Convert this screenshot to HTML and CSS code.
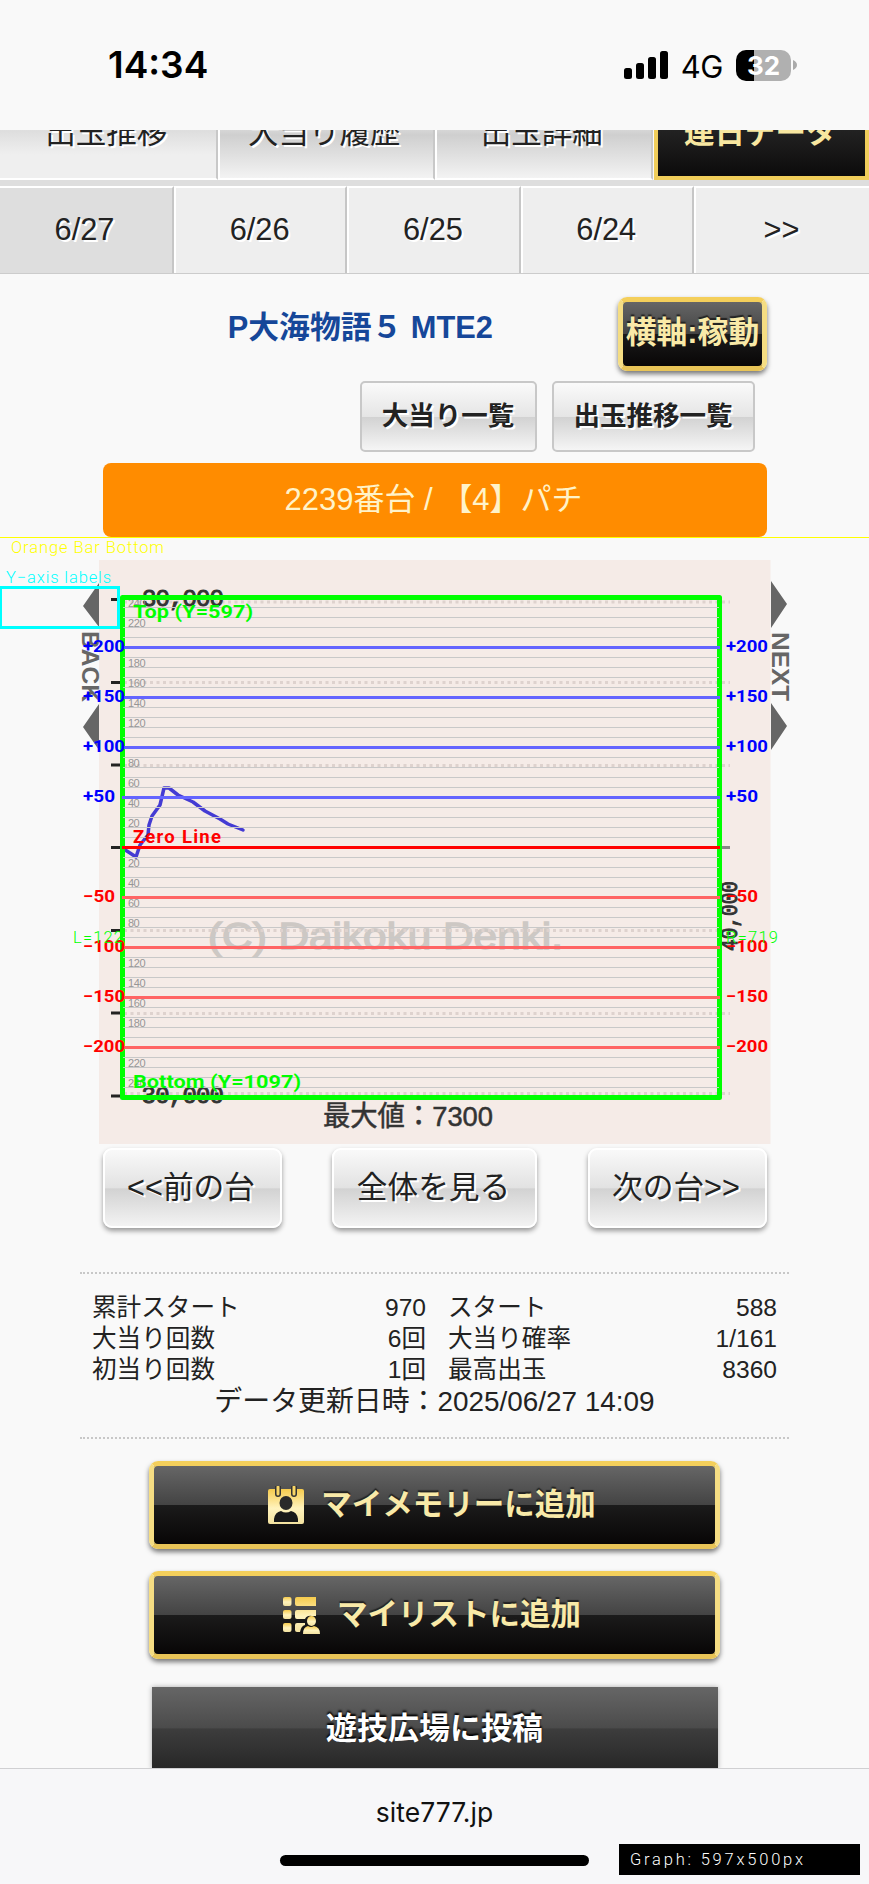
FILE: index.html
```html
<!DOCTYPE html>
<html lang="ja">
<head>
<meta charset="utf-8">
<title>site777.jp</title>
<link rel="stylesheet" href="styles.css">
</head>
<body>
<header class="status">
  <span class="clock">14:34</span>
  <div class="signals">
    <svg class="bars" width="44" height="28" viewBox="0 0 44 28"><rect x="0" y="17" width="8" height="11" rx="2.5"/><rect x="12" y="12" width="8" height="16" rx="2.5"/><rect x="24" y="6" width="8" height="22" rx="2.5"/><rect x="36" y="0" width="8" height="28" rx="2.5"/></svg>
    <span class="net">4G</span>
    <span class="battery"><span class="level">32</span><svg width="5" height="10" viewBox="0 0 5 10"><path d="M1 0Q5 2 5 5T1 10Z" fill="#aaa"/></svg></span>
  </div>
</header>
<nav class="tabs">
  <a class="tab first">出玉推移</a><a class="tab">大当り履歴</a><a class="tab">出玉詳細</a><a class="tab current">連日データ</a>
</nav>
<nav class="dates">
  <a class="date selected">6/27</a><a class="date">6/26</a><a class="date">6/25</a><a class="date">6/24</a><a class="date">&gt;&gt;</a>
</nav>
<main>
  <div class="heading"><h1>P大海物語５ MTE2</h1><a class="gold axis">横軸:稼動</a></div>
  <div class="lists"><a class="flat hits">大当り一覧</a><a class="flat trend">出玉推移一覧</a></div>
  <div class="machine">2239番台 / 【4】パチ</div>
  <svg class="chart" id="chart" width="869" height="607" viewBox="0 537 869 607">
    <rect x="99" y="560" width="671.5" height="584" fill="#f5ebe7"/>
    <g class="side">
      <path d="M99 583L83 606L99 627ZM99 704L83 727L99 750ZM771 581L787 604L771 628ZM771 703L787 726L771 750Z"/>
      <text transform="translate(81.500 631) rotate(90)" textLength="71" lengthAdjust="spacingAndGlyphs">BACK</text>
      <text transform="translate(771.500 632) rotate(90)" textLength="69" lengthAdjust="spacingAndGlyphs">NEXT</text>
    </g>
    <text class="copyright" x="208" y="949" textLength="355" lengthAdjust="spacingAndGlyphs">(C) Daikoku Denki.</text>
    <path class="dots" d="M124 602H730M124 682.5H730M124 765.5H730M124 930.5H730M124 1013.5H730M124 1093.5H730"/>
    <path class="ticks" d="M111 599.5H122M111 682.5H122M111 765H122M111 847.5H122M111 930.5H122M111 1013H122M111 1096H122"/>
    <path d="M720 847.5H730" stroke="#888" stroke-width="3"/>
    <g class="range">
      <text x="142" y="605.5" textLength="82">30,000</text>
      <text x="128" y="1102.5" textLength="96">-30,000</text>
      <text transform="translate(737 951) rotate(-90)" textLength="70" lengthAdjust="spacingAndGlyphs">40,000</text>
    </g>
    <text class="max" x="323" y="1126" textLength="170" lengthAdjust="spacingAndGlyphs">最大値：7300</text>
    <path class="series" d="M122 848L130 853L136 857L140 845L148 835L149 825L152 816L160 805L164 788H169L178 795L193 802L205 811L220 819L228 824L243 830"/>
    <g id="grid"></g>
    <rect class="frame" x="122.5" y="597.5" width="597" height="500"/>
    <g id="levels"></g>
    <path d="M122 847.5H720" stroke="#f00" stroke-width="3"/>
    <g class="note green">
      <text x="133" y="618" textLength="120" lengthAdjust="spacingAndGlyphs">Top (Y=597)</text>
      <text x="133" y="1088" textLength="168" lengthAdjust="spacingAndGlyphs">Bottom (Y=1097)</text>
    </g>
    <text class="note red" x="133" y="843" textLength="88" lengthAdjust="spacing">Zero Line</text>
    <g class="thin">
      <text x="73" y="943" textLength="50" lengthAdjust="spacing" fill="#0f0">L=122</text>
      <text x="726" y="943" textLength="52" lengthAdjust="spacing" fill="#0f0">R=719</text>
      <text x="11" y="553" textLength="153" lengthAdjust="spacing" fill="#ff0">Orange Bar Bottom</text>
      <text x="6" y="583" textLength="105" lengthAdjust="spacing" fill="#0ff">Y−axis labels</text>
    </g>
    <path d="M0 537.5H869" stroke="#ff0" stroke-width="1"/>
    <rect x="0.5" y="587.5" width="118" height="40" fill="none" stroke="#0ff" stroke-width="3"/>
  </svg>
  <div class="pager"><a class="soft">&lt;&lt;前の台</a><a class="soft wide">全体を見る</a><a class="soft">次の台&gt;&gt;</a></div>
  <section class="stats">
    <div class="grid">
      <span>累計スタート</span><b>970</b><span>スタート</span><b>588</b>
      <span>大当り回数</span><b>6回</b><span>大当り確率</span><b>1/161</b>
      <span>初当り回数</span><b>1回</b><span>最高出玉</span><b>8360</b>
    </div>
    <p class="updated">データ更新日時：2025/06/27 14:09</p>
  </section>
  <div class="actions">
    <a class="gold action">
      <svg width="36" height="38" viewBox="0 0 36 38"><defs><linearGradient id="gilt" x1="0" y1="0" x2="0" y2="1"><stop offset="0" stop-color="#f6cb4c"/><stop offset=".55" stop-color="#fff3bd"/><stop offset="1" stop-color="#f3e2a0"/></linearGradient></defs>
        <path fill="url(#gilt)" d="M2 3H34Q36 3 36 5V36Q36 38 34 38H2Q0 38 0 36V5Q0 3 2 3Z"/>
        <path d="M10 1V8M26 1V8" stroke="#333" stroke-width="6" stroke-linecap="round"/><path d="M10 1V8M26 1V8" stroke="#f8d566" stroke-width="3" stroke-linecap="round"/>
        <ellipse cx="18" cy="17" rx="6.5" ry="7" fill="#292929"/><path d="M6 36V33Q7 26 13 25Q18 28 23 25Q29 26 30 33V36Z" fill="#191919"/></svg>
      <span>マイメモリーに追加</span></a>
    <a class="gold action">
      <svg width="37" height="37" viewBox="0 0 37 37"><g fill="url(#gilt)"><rect width="8.500" height="9" rx="2"/><rect y="13" width="8.500" height="9" rx="2"/><rect y="26" width="8.500" height="9" rx="2"/><path d="M14 0H33V9H14Q12 9 12 7V2Q12 0 14 0ZM14 13H33V19H29Q24 18 22 22H14Q12 22 12 20V15Q12 13 14 13ZM14 26H22V28Q18 29 17 35H14Q12 35 12 33V28Q12 26 14 26Z"/><ellipse cx="28.500" cy="24" rx="4.500" ry="5"/><path d="M20 37Q20 30 25 29Q28 31 31 29Q37 30 37 37Z"/></g></svg>
      <span>マイリストに追加</span></a>
    <a class="post">遊技広場に投稿</a>
  </div>
</main>
<footer class="browser">
  <span class="url">site777.jp</span>
  <div class="home"></div>
  <span class="size"><svg width="241" height="31" viewBox="0 0 241 31"><text x="11" y="21" textLength="173" lengthAdjust="spacing" fill="#fff">Graph: 597x500px</text></svg></span>
</footer>
<script src="chart.js"></script>
</body>
</html>
```
FILE: styles.css
```css
* { box-sizing: border-box; }
body { margin: 0; width: 869px; height: 1884px; overflow: hidden; background: #f9f9f9; color: #222; font-family: "Liberation Sans", "Noto Sans CJK JP", sans-serif; }
a, span { white-space: nowrap; }
.status { height: 130px; display: flex; justify-content: space-between; padding: 45px 72px 0 108px; font-family: Inter, sans-serif; color: #000; }
.clock { font-size: 37px; font-weight: 600; line-height: 40px; }
.signals { display: flex; height: 40px; align-items: center; }
.net { font-size: 31px; margin: 2px 13px 0 13px; letter-spacing: -0.5px; }
.battery { display: flex; align-items: center; gap: 1px; }
.level { width: 55px; height: 31px; border-radius: 10px; background: linear-gradient(90deg, #000 32%, #b0b0b0 32%); color: #fff; font-size: 26px; font-weight: 700; line-height: 31px; text-align: center; }
.tabs { height: 56px; display: flex; border-bottom: 6px solid #dedede; overflow: hidden; align-items: flex-end; }
.tab { flex: 0 0 217.500px; height: 80px; padding-right: 2px; border-right: 2px solid #c8c8c8; border-bottom: 2px solid #fff; box-shadow: inset 2px 0 #fff; background: linear-gradient(#fff, #cfcfcf 45%, #f3f3f3); font-size: 30.5px; line-height: 65px; text-align: center; text-shadow: 2px 2px #fff; }
.tab.first { background: linear-gradient(#eee, #dedede 40%, #efefef 70%); box-shadow: none; padding-right: 3px; }
.tab.current { flex: 1; border: 4px solid #f0cd5a; border-top: 0; background: linear-gradient(#222 40%, #0c0b0b); color: #f8e7a0; font-weight: 700; text-shadow: none; box-shadow: none; line-height: 65px; margin-left: 1px; }
.dates { height: 88px; display: flex; border-bottom: 1px solid #ccc; }
.date { flex: 0 0 173.300px; background: #eee; border-right: 2px solid #c6c6c6; border-top: 2px solid #fff; box-shadow: inset 2px 0 #fff; font-size: 30.8px; line-height: 84px; text-align: center; text-shadow: 2px 2px #fff; }
.date.selected { background: #dedede; padding-right: 3px; box-shadow: none; flex-basis: 174px; }
.date:last-child { border-right: 0; flex: 1; }
.heading { display: flex; justify-content: flex-end; margin: 23px 102px 0 0; }
h1 { margin: 9px 125px 0 0; font-size: 30.8px; line-height: 44px; color: #164799; white-space: nowrap; }
.gold { border: 5px solid #f1cc57; border-color: #f4cf5b #f5dd83 #e8c457; border-radius: 9px; background: linear-gradient(#666, #444 49.500%, #1b1b1b 50%, #080606); color: #f9eaa8; font-weight: 700; text-shadow: 0 -2px 1px #222; box-shadow: 0 3px 5px #777; }
.axis { width: 149px; height: 74px; font-size: 30.8px; line-height: 61px; display: flex; justify-content: center; }
.lists { display: flex; justify-content: flex-end; gap: 15px; padding: 10px 114.500px 11px 0; }
.flat { height: 71px; border: 2px solid #c8c8c8; border-radius: 5px; background: linear-gradient(#fafafa, #e5e5e5 50%, #d2d2d2 51%, #f5f5f5); font-size: 26.500px; font-weight: 700; line-height: 66px; text-align: center; text-shadow: 2px 2px #fff; }
.hits { width: 177px; }
.trend { width: 203px; }
.machine { width: 664px; height: 74px; margin: 0 0 0 103px; border-radius: 8px; background: #ff8c00; color: #fff3c9; font-size: 31px; line-height: 74px; text-align: center; white-space: nowrap; padding-right: 3px; }
.chart { display: block; }
.side path, .side text { fill: #666; }
.side text { font: 700 24px "Liberation Sans", sans-serif; }
.copyright { font: 36px "Liberation Sans", sans-serif; fill: #cdc8c4; stroke: #cdc8c4; stroke-width: 1.4; }
.dots { stroke: #ded2ce; stroke-width: 3; stroke-dasharray: 3 3.5; }
.ticks { stroke: #222; stroke-width: 3; }
.range text { font: 24px "Liberation Mono", monospace; fill: #333; stroke: #333; stroke-width: 1; }
.max { font: 28px "Liberation Sans", "Noto Sans CJK JP", sans-serif; fill: #333; stroke: #333; stroke-width: .5; }
.series { fill: none; stroke: #443bd3; stroke-width: 3.5; stroke-linejoin: round; stroke-linecap: round; }
.minor { stroke: #c8c8c8; stroke-width: 1; }
.value { font: 11px "Liberation Sans", sans-serif; fill: #969696; }
.frame { fill: none; stroke: #0f0; stroke-width: 5; stroke-linejoin: round; }
.level-label { font: 700 16.500px Roboto, sans-serif; }
.note { font: 700 18.500px Roboto, sans-serif; }
.green { fill: #0f0; }
.red { fill: #f00; }
.thin text, .size text { font: 300 16.500px Roboto, sans-serif; }
.pager { display: flex; justify-content: space-between; padding: 4px 102.500px 0 102.500px; height: 128px; }
.soft { width: 179px; height: 80px; border: 2px solid #fff; border-radius: 9px; background: linear-gradient(#f9f9f9, #e2e2e2 50%, #d2d2d2 51%, #f3f3f3); box-shadow: 0 3px 5px #999; font-size: 30.7px; line-height: 75px; text-align: center; text-shadow: 2px 2px #fff; padding-right: 2px; }
.wide { width: 205px; }
.stats { height: 167px; margin: 0 80px; border-top: 2px dotted #c8c8c8; border-bottom: 2px dotted #c8c8c8; padding: 18px 12px 0; }
.grid { display: grid; grid-template-columns: 190px 144px 190px 138px; column-gap: 0; font-size: 24.600px; line-height: 31px; }
.grid span:nth-child(4n+3) { padding-left: 22px; }
.grid b { font-weight: 400; text-align: right; }
.grid b:nth-child(4n) { margin-right: -23px; }
.updated { margin: 0; font-size: 27.900px; line-height: 34px; text-align: center; white-space: nowrap; }
.actions { display: flex; flex-direction: column; align-items: center; padding-top: 22px; gap: 22px; height: 329px; }
.action { width: 571px; height: 88px; display: flex; align-items: center; justify-content: center; gap: 17px; font-size: 30.5px; flex: none; padding-right: 5px; }
.action span { margin-top: -6px; }
.post { width: 566px; flex: none; height: 82px; margin-top: 6px; background: linear-gradient(#666, #4b4b4b 50%, #3d3d3d 51%, #272727); box-shadow: 0 0 5px #aaa; color: #fff; font-size: 31px; font-weight: 700; line-height: 84px; text-align: center; text-shadow: 0 -2px 2px #000; }
.browser { position: relative; height: 116px; border-top: 1px solid #d0d0d2; background: #f7f7f9; display: flex; flex-direction: column; align-items: center; padding-top: 24px; }
.url { font: 26.500px/38px Inter, sans-serif; color: #111; }
.home { width: 309px; height: 11px; margin-top: 24px; border-radius: 6px; background: #000; }
.size { position: absolute; left: 619px; top: 75px; width: 241px; height: 31px; background: #000; }
```
FILE: chart.js
```js
const NS = "http://www.w3.org/2000/svg";
const zero = 847.5;
function add(parent, name, attrs, text) {
  const el = document.createElementNS(NS, name);
  for (const key in attrs) el.setAttribute(key, attrs[key]);
  if (text) el.textContent = text;
  parent.appendChild(el);
}
const grid = document.getElementById("grid");
const levels = document.getElementById("levels");
// Minor rules every 10 units, labels every 20, coloured levels every 50.
for (let v = -240; v <= 240; v += 10) {
  if (v === 0) continue;
  const y = zero - v;
  if (v % 50) {
    add(levels, "path", { class: "minor", d: `M123 ${y}H719` });
    if (v % 20 === 0) add(grid, "text", { class: "value", x: 128, y: y - 1, textLength: Math.abs(v) > 99 ? 17.5 : 11.5 }, String(Math.abs(v)));
  } else {
    add(levels, "path", { d: `M122 ${y}H720`, stroke: v > 0 ? "#6464ff" : "#ff6464", "stroke-width": 3 });
    const label = (v > 0 ? "+" : "−") + Math.abs(v);
    const len = Math.abs(v) > 99 ? 42 : 32;
    for (const x of [83, 726]) add(levels, "text", { class: "level-label", x, y: y + 4, textLength: len, lengthAdjust: "spacingAndGlyphs", fill: v > 0 ? "#00f" : "#f00" }, label);
  }
}
```
